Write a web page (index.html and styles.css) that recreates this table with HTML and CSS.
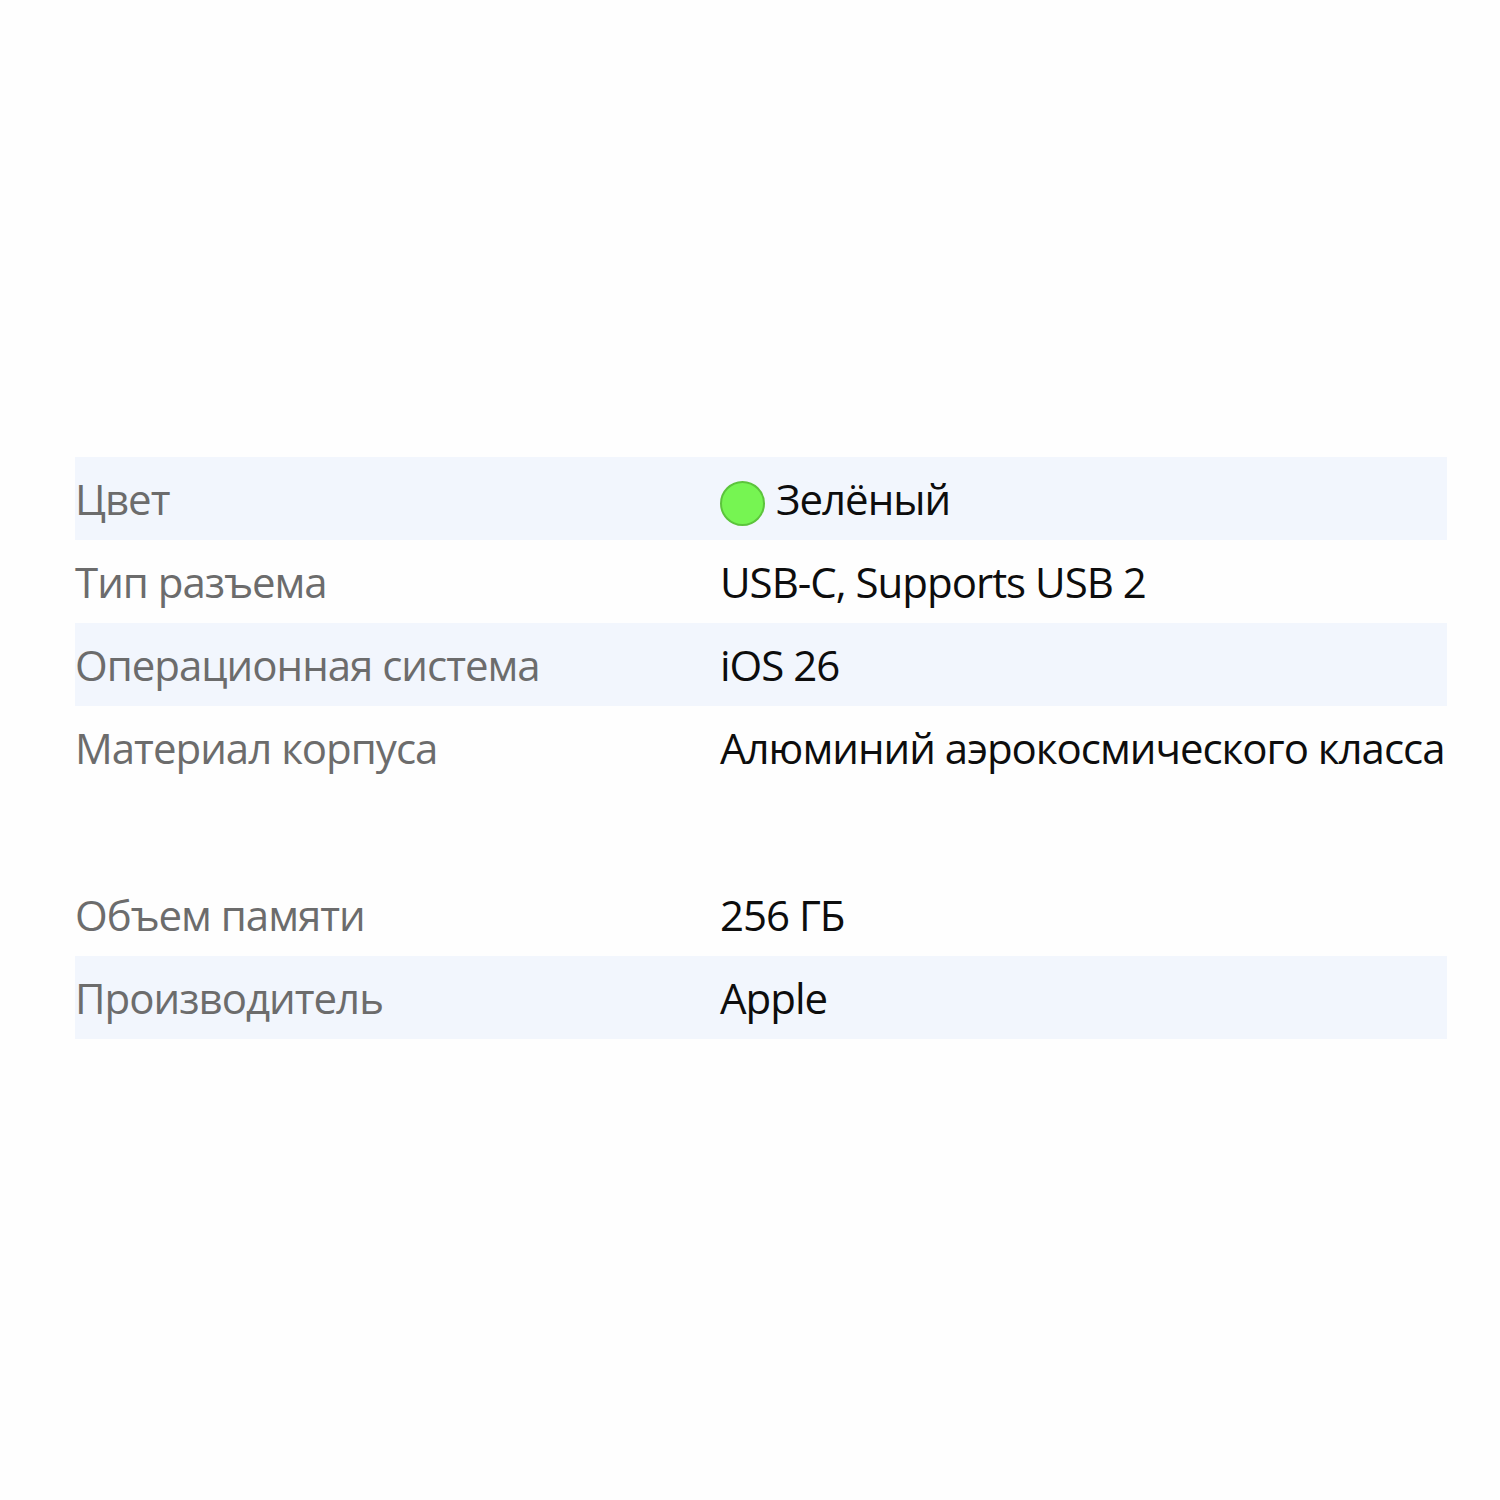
FILE: index.html
```html
<!DOCTYPE html>
<html lang="ru">
<head>
<meta charset="utf-8">
<link rel="stylesheet" href="styles.css">
</head>
<body>
<table class="specs">
  <tr class="shaded">
    <td class="label">Цвет</td>
    <td class="value"><span class="swatch"></span>Зелёный</td>
  </tr>
  <tr>
    <td class="label">Тип разъема</td>
    <td class="value">USB-C, Supports USB 2</td>
  </tr>
  <tr class="shaded">
    <td class="label">Операционная система</td>
    <td class="value">iOS 26</td>
  </tr>
  <tr class="tall">
    <td class="label">Материал корпуса</td>
    <td class="value">Алюминий аэрокосмического класса</td>
  </tr>
  <tr>
    <td class="label">Объем памяти</td>
    <td class="value">256 ГБ</td>
  </tr>
  <tr class="shaded">
    <td class="label">Производитель</td>
    <td class="value">Apple</td>
  </tr>
</table>
</body>
</html>
```
FILE: styles.css
```css
html, body {
  margin: 0;
  padding: 0;
  background: #fefefe;
}
body {
  padding: 457px 53px 0 75px;
  font-family: "Open Sans", "Noto Sans", sans-serif;
}
.specs {
  width: 1372px;
  border-collapse: collapse;
  font-size: 42px;
  letter-spacing: -1px;
}
.specs td {
  height: 83px;
  padding: 0;
  vertical-align: middle;
  white-space: nowrap;
}
.specs .shaded {
  background: #f2f6fd;
}
.specs .tall td {
  height: 167px;
  vertical-align: top;
  line-height: 83px;
}
.label {
  width: 645px;
  color: #6c6c6c;
}
.value {
  color: #0d0d0d;
}
.swatch {
  display: inline-block;
  width: 41px;
  height: 41px;
  border-radius: 50%;
  background: #76f552;
  border: 2px solid #5cc43c;
  margin-right: 11px;
  vertical-align: -11px;
}
```
